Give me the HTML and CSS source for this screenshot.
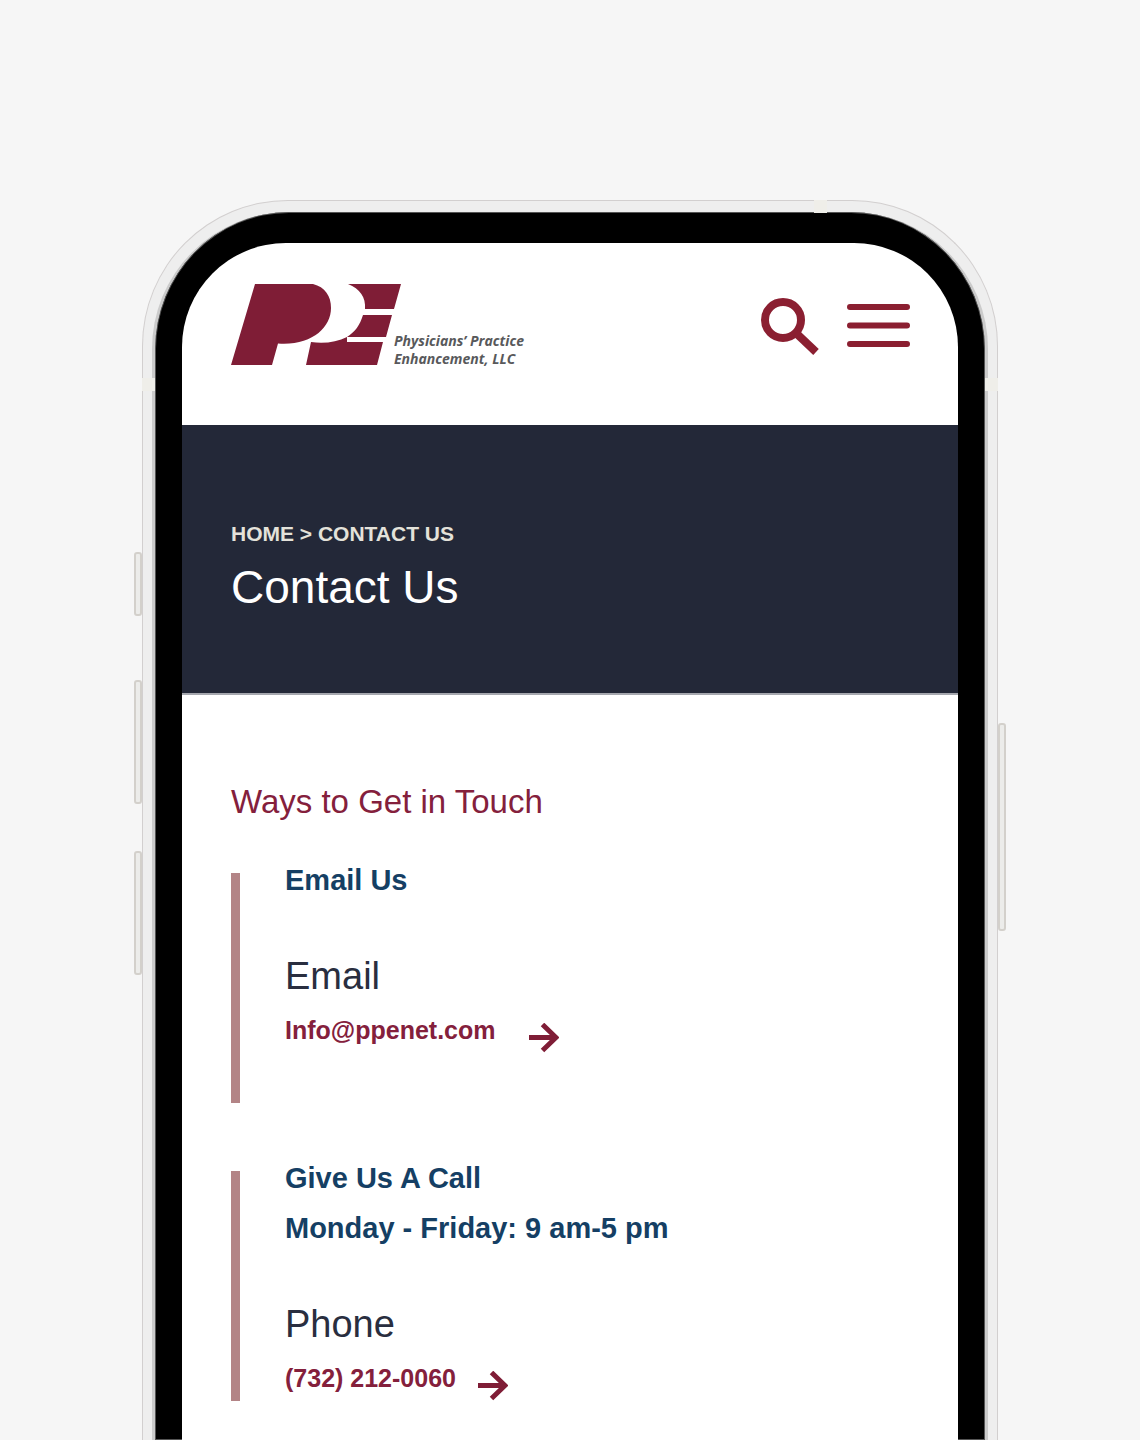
FILE: index.html
```html
<!DOCTYPE html>
<html lang="en">
<head>
<meta charset="utf-8">
<meta name="viewport" content="width=device-width, initial-scale=1">
<title>Contact Us</title>
<link rel="stylesheet" href="styles.css">
</head>
<body>
<div class="stage">
  <div class="phone">
    <span class="antenna antenna-top"></span>
    <span class="antenna antenna-left"></span>
    <span class="antenna antenna-right"></span>
    <span class="key key-mute"></span>
    <span class="key key-up"></span>
    <span class="key key-down"></span>
    <span class="key key-power"></span>
    <div class="bezel">
      <div class="screen">
        <header class="site-header">
          <a class="logo" href="#">
            <svg class="logo-mark" viewBox="0 0 171 82" aria-hidden="true">
              <path d="M24 0H82C94 3 100 12 100 24C100 44 80 62 47 59.500L41 81H0Z"/>
              <path d="M117 0H170L163 25H134C135 13 129 5 117 0Z"/>
              <path d="M132 31H161L155 53H116C124 48 129 41 132 31Z"/>
              <path d="M116 53V58H152L146 81H75L80 58C93 60 106 58 116 53Z"/>
            </svg>
            <span class="logo-text">Physicians’ Practice<br>Enhancement, LLC</span>
          </a>
          <div class="header-actions">
            <button class="icon-button" type="button" aria-label="Search">
              <svg width="58" height="58" viewBox="0 0 58 58" fill="none" stroke="currentColor">
                <circle cx="22" cy="22" r="18" stroke-width="8"/>
                <path d="M35 35L55 54" stroke-width="8"/>
              </svg>
            </button>
            <button class="icon-button" type="button" aria-label="Menu">
              <svg width="63" height="58" viewBox="0 0 63 58" fill="none" stroke="currentColor" stroke-width="6" stroke-linecap="round">
                <path d="M3 9H60M3 27.500H60M3 46H60"/>
              </svg>
            </button>
          </div>
        </header>
        <section class="hero">
          <nav class="breadcrumb" aria-label="Breadcrumb"><a href="#">HOME</a> &gt; <a href="#">CONTACT US</a></nav>
          <h1 class="hero-title">Contact Us</h1>
        </section>
        <main class="content">
          <h2 class="section-title">Ways to Get in Touch</h2>
          <div class="cards">
            <article class="card">
              <span class="card-bar"></span>
              <div class="card-body">
                <h3 class="card-title">Email Us</h3>
                <h4 class="card-label">Email</h4>
                <a class="card-link card-link-wide" href="mailto:Info@ppenet.com">Info@ppenet.com
                  <svg class="arrow" viewBox="0 0 30 31" aria-hidden="true"><path d="M0 14.500H27M13.500 1.500L27 14.500L13.500 27.500"/></svg>
                </a>
              </div>
            </article>
            <article class="card">
              <span class="card-bar"></span>
              <div class="card-body">
                <h3 class="card-title">Give Us A Call<br>Monday - Friday: 9 am-5 pm</h3>
                <h4 class="card-label">Phone</h4>
                <a class="card-link" href="tel:+17322120060">(732) 212-0060
                  <svg class="arrow" viewBox="0 0 30 31" aria-hidden="true"><path d="M0 14.500H27M13.500 1.500L27 14.500L13.500 27.500"/></svg>
                </a>
              </div>
            </article>
          </div>
        </main>
      </div>
    </div>
  </div>
</div>
</body>
</html>
```
FILE: styles.css
```css
* {
  box-sizing: border-box;
}

body {
  margin: 0;
  background: #f6f6f6;
  font-family: "Liberation Sans", Arial, sans-serif;
}

h1, h2, h3, h4 {
  margin: 0;
  font-weight: 400;
}

a {
  color: inherit;
  text-decoration: none;
}

.stage {
  display: flex;
  flex-direction: column;
  min-height: 100vh;
  padding: 200px 142px 0;
}

/* Device */
.phone {
  position: relative;
  display: flex;
  flex: 1;
  padding: 11px 9px 0;
  border: 1px solid #d2cfcf;
  border-bottom: 0;
  border-radius: 146px 146px 0 0;
  background: #eee;
}

.bezel {
  display: flex;
  flex: 1;
  padding: 31px 27px 0;
  border: solid #cbcbcb;
  border-width: 0 3px;
  border-radius: 137px 137px 0 0;
  background: #000;
  background-clip: padding-box;
  box-shadow: inset 0 0 0 1px #555;
}

.screen {
  flex: 1;
  min-width: 0;
  border-radius: 104px 104px 0 0;
  background: #fff;
}

.antenna {
  position: absolute;
  width: 13px;
  height: 13px;
  background: #efeee9;
}

.antenna-top {
  top: -1px;
  right: 170px;
}

.antenna-left {
  top: 177px;
  left: -1px;
}

.antenna-right {
  top: 177px;
  right: -1px;
}

.key {
  position: absolute;
  left: -9px;
  width: 8px;
  height: 124px;
  border: 2px solid #d3d0cb;
  border-radius: 3px;
  background: #ececea;
}

.key-mute {
  top: 351px;
  height: 64px;
}

.key-up {
  top: 479px;
}

.key-down {
  top: 650px;
}

.key-power {
  top: 522px;
  right: -9px;
  left: auto;
  height: 208px;
}

/* Site header */
.site-header {
  display: flex;
  align-items: flex-start;
  justify-content: space-between;
  height: 182px;
  padding: 41px 48px 0 49px;
}

.logo {
  display: flex;
}

.logo-mark {
  width: 171px;
  height: 82px;
  margin-right: -8px;
  fill: #7f1d36;
}

.logo-text {
  padding-top: 48px;
  color: #58595b;
  font: italic 700 14px/18px "Open Sans", "Noto Sans", sans-serif;
  white-space: nowrap;
}

.header-actions {
  display: flex;
  gap: 28px;
  padding-top: 14px;
}

.icon-button {
  display: flex;
  padding: 0;
  border: 0;
  background: none;
  color: #8b1f31;
  cursor: pointer;
}

/* Page banner */
.hero {
  padding: 96px 49px 78px;
  border-bottom: 2px solid #a5a7ae;
  background: #232838;
  background-clip: padding-box;
  color: #fff;
}

.breadcrumb {
  margin-bottom: 12px;
  color: #e4e2da;
  font-size: 21px;
  font-weight: 700;
  line-height: 26px;
}

.hero-title {
  font-size: 46px;
  line-height: 56px;
}

/* Contact details */
.content {
  padding: 87px 49px 38px;
}

.section-title {
  margin-bottom: 33px;
  color: #84203c;
  font-size: 33px;
  line-height: 40px;
}

.cards {
  display: grid;
  gap: 49px;
}

.card {
  display: flex;
  gap: 45px;
  min-height: 249px;
}

.card-bar {
  width: 9px;
  margin: 18px 0 1px;
  background: #b38486;
}

.card-title {
  margin-bottom: 46px;
  color: #153f64;
  font-size: 29px;
  font-weight: 700;
  line-height: 50px;
}

.card-label {
  margin-bottom: 5px;
  color: #292e3f;
  font-size: 38px;
  line-height: 50px;
}

.card-link {
  display: flex;
  align-items: flex-end;
  gap: 22px;
  color: #84203c;
  font-size: 25px;
  font-weight: 700;
  line-height: 48px;
}

.card-link-wide {
  gap: 33px;
}

.arrow {
  width: 30px;
  height: 31px;
  fill: none;
  stroke: #7f1d36;
  stroke-width: 5px;
}
```
